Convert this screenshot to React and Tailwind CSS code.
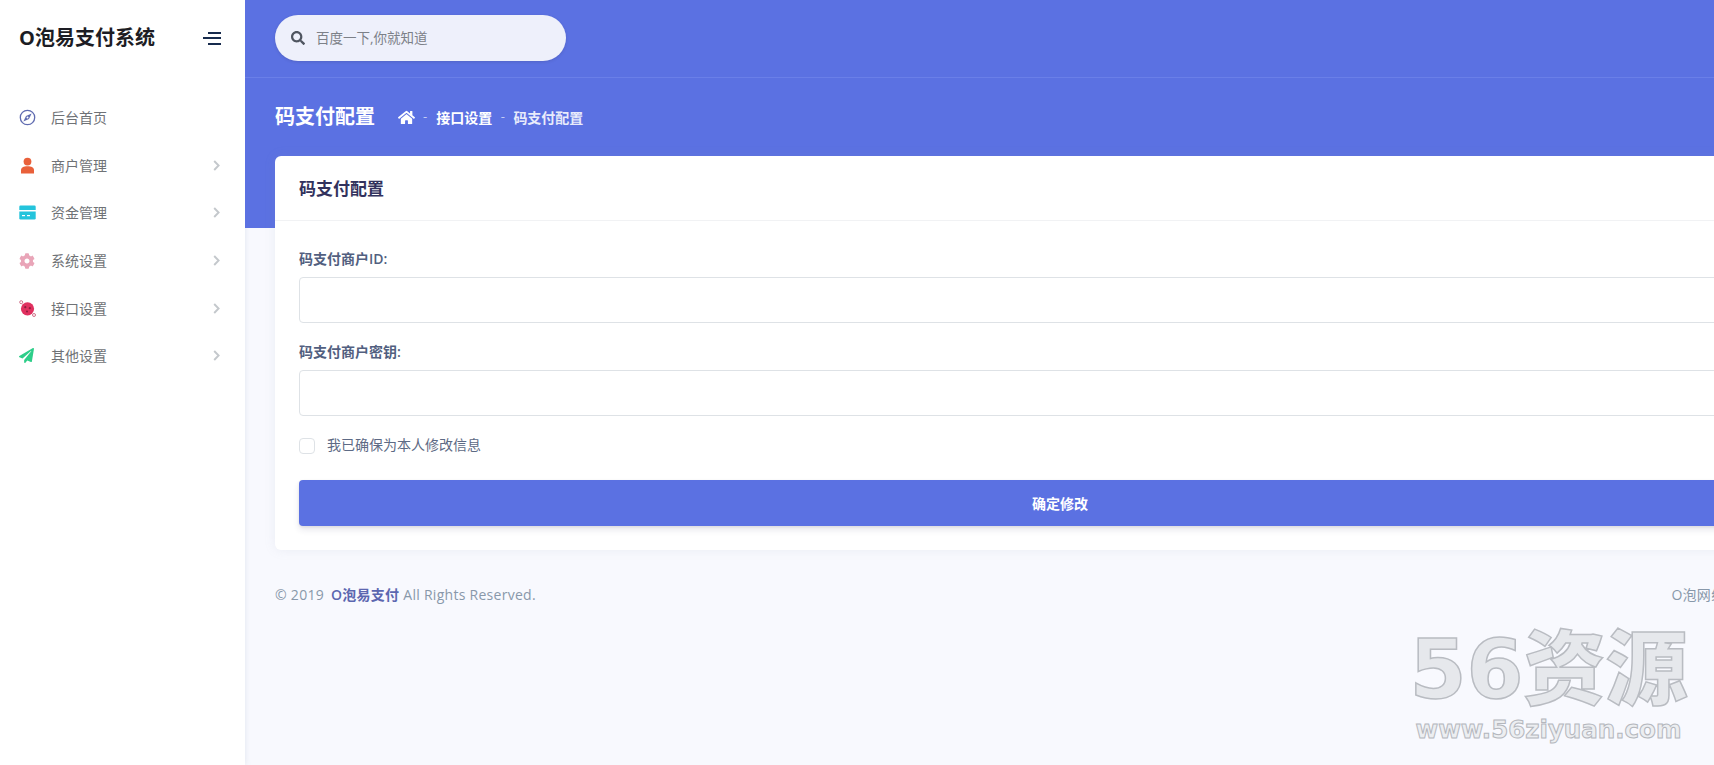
import React from "react";
import { FaHome, FaSearch, FaPaperPlane, FaCog } from "react-icons/fa";

const Compass = () => (
  <svg width="17" height="17" viewBox="0 0 17 17" fill="none">
    <circle cx="8.5" cy="8.5" r="7.2" stroke="#5f6bb0" strokeWidth="1.3" />
    <path d="M12.6 4.4 L10 10 L4.4 12.6 L7 7 Z" fill="#5f6bb0" />
    <circle cx="8.5" cy="8.5" r="1" fill="#fff" />
  </svg>
);
const Person = () => (
  <svg width="17" height="17" viewBox="0 0 17 17" fill="#e9603a">
    <circle cx="8.5" cy="4.6" r="3.9" />
    <path d="M2 16.5 V13 C2 10.5 4.5 9.2 8.5 9.2 C12.5 9.2 15 10.5 15 13 V16.5 Z" />
  </svg>
);
const Card = () => (
  <svg width="17" height="15" viewBox="0 0 17 15">
    <path d="M1.5 0.5 H15.5 A1.2 1.2 0 0 1 16.7 1.7 V5 H0.3 V1.7 A1.2 1.2 0 0 1 1.5 0.5 Z" fill="#24c4dc" />
    <path d="M0.3 6.5 H16.7 V13.3 A1.2 1.2 0 0 1 15.5 14.5 H1.5 A1.2 1.2 0 0 1 0.3 13.3 Z" fill="#24c4dc" />
    <rect x="3" y="10" width="3" height="1.2" fill="#fff" />
    <rect x="8" y="10" width="3" height="1.2" fill="#fff" />
  </svg>
);
const Planet = () => (
  <svg width="17" height="17" viewBox="0 0 17 17">
    <circle cx="8.5" cy="8.8" r="6.6" fill="#e0305f" />
    <circle cx="2.2" cy="2.2" r="1.5" fill="#fff" stroke="#c5506f" strokeWidth="0.8" />
    <circle cx="15" cy="15" r="1.5" fill="#fff" stroke="#c5506f" strokeWidth="0.8" />
    <circle cx="6.3" cy="7.2" r="1.1" fill="#8d1c3c" />
    <circle cx="10.8" cy="8.2" r="1.1" fill="#8d1c3c" />
    <circle cx="8" cy="11.4" r="1" fill="#8d1c3c" />
  </svg>
);
const Chevron = () => (
  <svg width="7" height="11" viewBox="0 0 7 11" fill="none">
    <path d="M1.2 1 L5.6 5.5 L1.2 10" stroke="#c4c8cc" strokeWidth="1.9" />
  </svg>
);

const menu = [
  { label: "后台首页", icon: <Compass />, arrow: false },
  { label: "商户管理", icon: <Person />, arrow: true },
  { label: "资金管理", icon: <Card />, arrow: true },
  { label: "系统设置", icon: <FaCog size={16} color="#e9a5b8" />, arrow: true },
  { label: "接口设置", icon: <Planet />, arrow: true },
  { label: "其他设置", icon: <FaPaperPlane size={15} color="#2dce89" />, arrow: true },
];

export default function App() {
  return (
    <div className="relative flex h-[765px] w-full overflow-hidden bg-[#f8f9fe] font-['Open_Sans','Noto_Sans_CJK_SC',sans-serif]">
      <aside className="w-[245px] shrink-0 bg-white shadow-[0_0_6px_rgba(136,152,170,0.2)]">
        <div className="flex h-[76px] items-center justify-between pl-[19px] pr-[24px]">
          <span className="text-[20px] font-bold leading-none text-[#1d1d24]">O泡易支付系统</span>
          <span className="flex w-[18px] flex-col items-end gap-[3.5px]">
            <span className="h-[2px] w-[13px] bg-[#172b4d]" />
            <span className="h-[2px] w-[18px] bg-[#172b4d]" />
            <span className="h-[2px] w-[13px] bg-[#172b4d]" />
          </span>
        </div>
        <nav className="mt-[18px] flex flex-col pl-[19px] pr-[25px]">
          {menu.map((m) => (
            <div key={m.label} className="flex h-[47.6px] items-center">
              <span className="flex w-[32px] shrink-0 items-center">{m.icon}</span>
              <span className="flex-1 text-[14px] text-[#6f7276]">{m.label}</span>
              {m.arrow && <Chevron />}
            </div>
          ))}
        </nav>
      </aside>

      <main className="w-[1630px] shrink-0">
        <div className="h-[228px] bg-[#5b71e2]">
          <div className="flex h-[78px] items-start border-b border-[#6a7fe8] pl-[30px] pt-[15px]">
            <div className="flex h-[46px] w-[291px] items-center rounded-full bg-[#eef0fb] pl-[16px] shadow-[0_1px_3px_rgba(50,50,93,0.2)]">
              <FaSearch size={14} color="#4f5560" />
              <span className="ml-[11px] text-[13.5px] text-[#7c8088]">百度一下,你就知道</span>
            </div>
          </div>
          <div className="flex h-[78px] items-center pl-[30px] text-white">
            <h1 className="text-[20px] font-bold">码支付配置</h1>
            <FaHome size={17} className="ml-[23px]" />
            <span className="mx-[8px] text-[13px] text-[#c4ccf5]">-</span>
            <span className="ml-[1px] text-[14px] font-bold">接口设置</span>
            <span className="mx-[8.5px] text-[13px] text-[#c4ccf5]">-</span>
            <span className="text-[14px] font-bold text-[#e8ebfb]">码支付配置</span>
          </div>
        </div>

        <div className="relative mx-[30px] -mt-[72px] h-[394px] rounded-[6px] bg-white shadow-[0_0_12px_rgba(136,152,170,0.12)]">
          <div className="flex h-[65px] items-center border-b border-[#f1f2f4] pl-[24px] pt-[2px] text-[17px] font-bold text-[#32325d]">
            码支付配置
          </div>
          <div className="px-[24px] pt-[27px]">
            <label className="block h-[21px] text-[14px] font-semibold leading-[21px] text-[#525f7f]">码支付商户ID:</label>
            <div className="mt-[8px] h-[46px] rounded-[4px] border border-[#dee2e6] bg-white" />
            <label className="mt-[18px] block h-[21px] text-[14px] font-semibold leading-[21px] text-[#525f7f]">码支付商户密钥:</label>
            <div className="mt-[8px] h-[46px] rounded-[4px] border border-[#dee2e6] bg-white" />
            <div className="mt-[22px] flex h-[16px] items-center">
              <span className="h-[16px] w-[16px] rounded-[4px] border border-[#dee2e6] bg-white" />
              <span className="ml-[12px] -translate-y-[2px] text-[14px] text-[#5d6a85]">我已确保为本人修改信息</span>
            </div>
            <button className="mt-[26px] flex h-[46px] w-full items-center justify-center rounded-[4px] bg-[#5b71e2] text-[14px] font-bold text-white shadow-[0_4px_6px_rgba(50,50,93,0.11),0_1px_3px_rgba(0,0,0,0.08)]">
              确定修改
            </button>
          </div>
        </div>

        <footer className="mx-[30px] mt-[34px] flex items-center justify-between text-[14px] tracking-[0.28px] text-[#8898aa]">
          <span>
            © 2019 <span className="ml-[3px] font-semibold text-[#5c67b0]">O泡易支付</span> All Rights Reserved.
          </span>
          <span className="mr-[91px]">O泡网络科技</span>
        </footer>
      </main>

      <div className="absolute left-[1405px] top-[624px] flex w-[287px] flex-col items-center font-['DejaVu_Sans','Noto_Sans_CJK_SC',sans-serif]">
        <span className="whitespace-nowrap text-[82px] font-black leading-[92px] text-[#e6e8ec] [-webkit-text-stroke:1.5px_#b9bcc2]">56资源</span>
        <span className="whitespace-nowrap text-[24.5px] font-black leading-[28px] text-[#eceef1] [-webkit-text-stroke:1px_#b4b7bd]">www.56ziyuan.com</span>
      </div>
    </div>
  );
}
